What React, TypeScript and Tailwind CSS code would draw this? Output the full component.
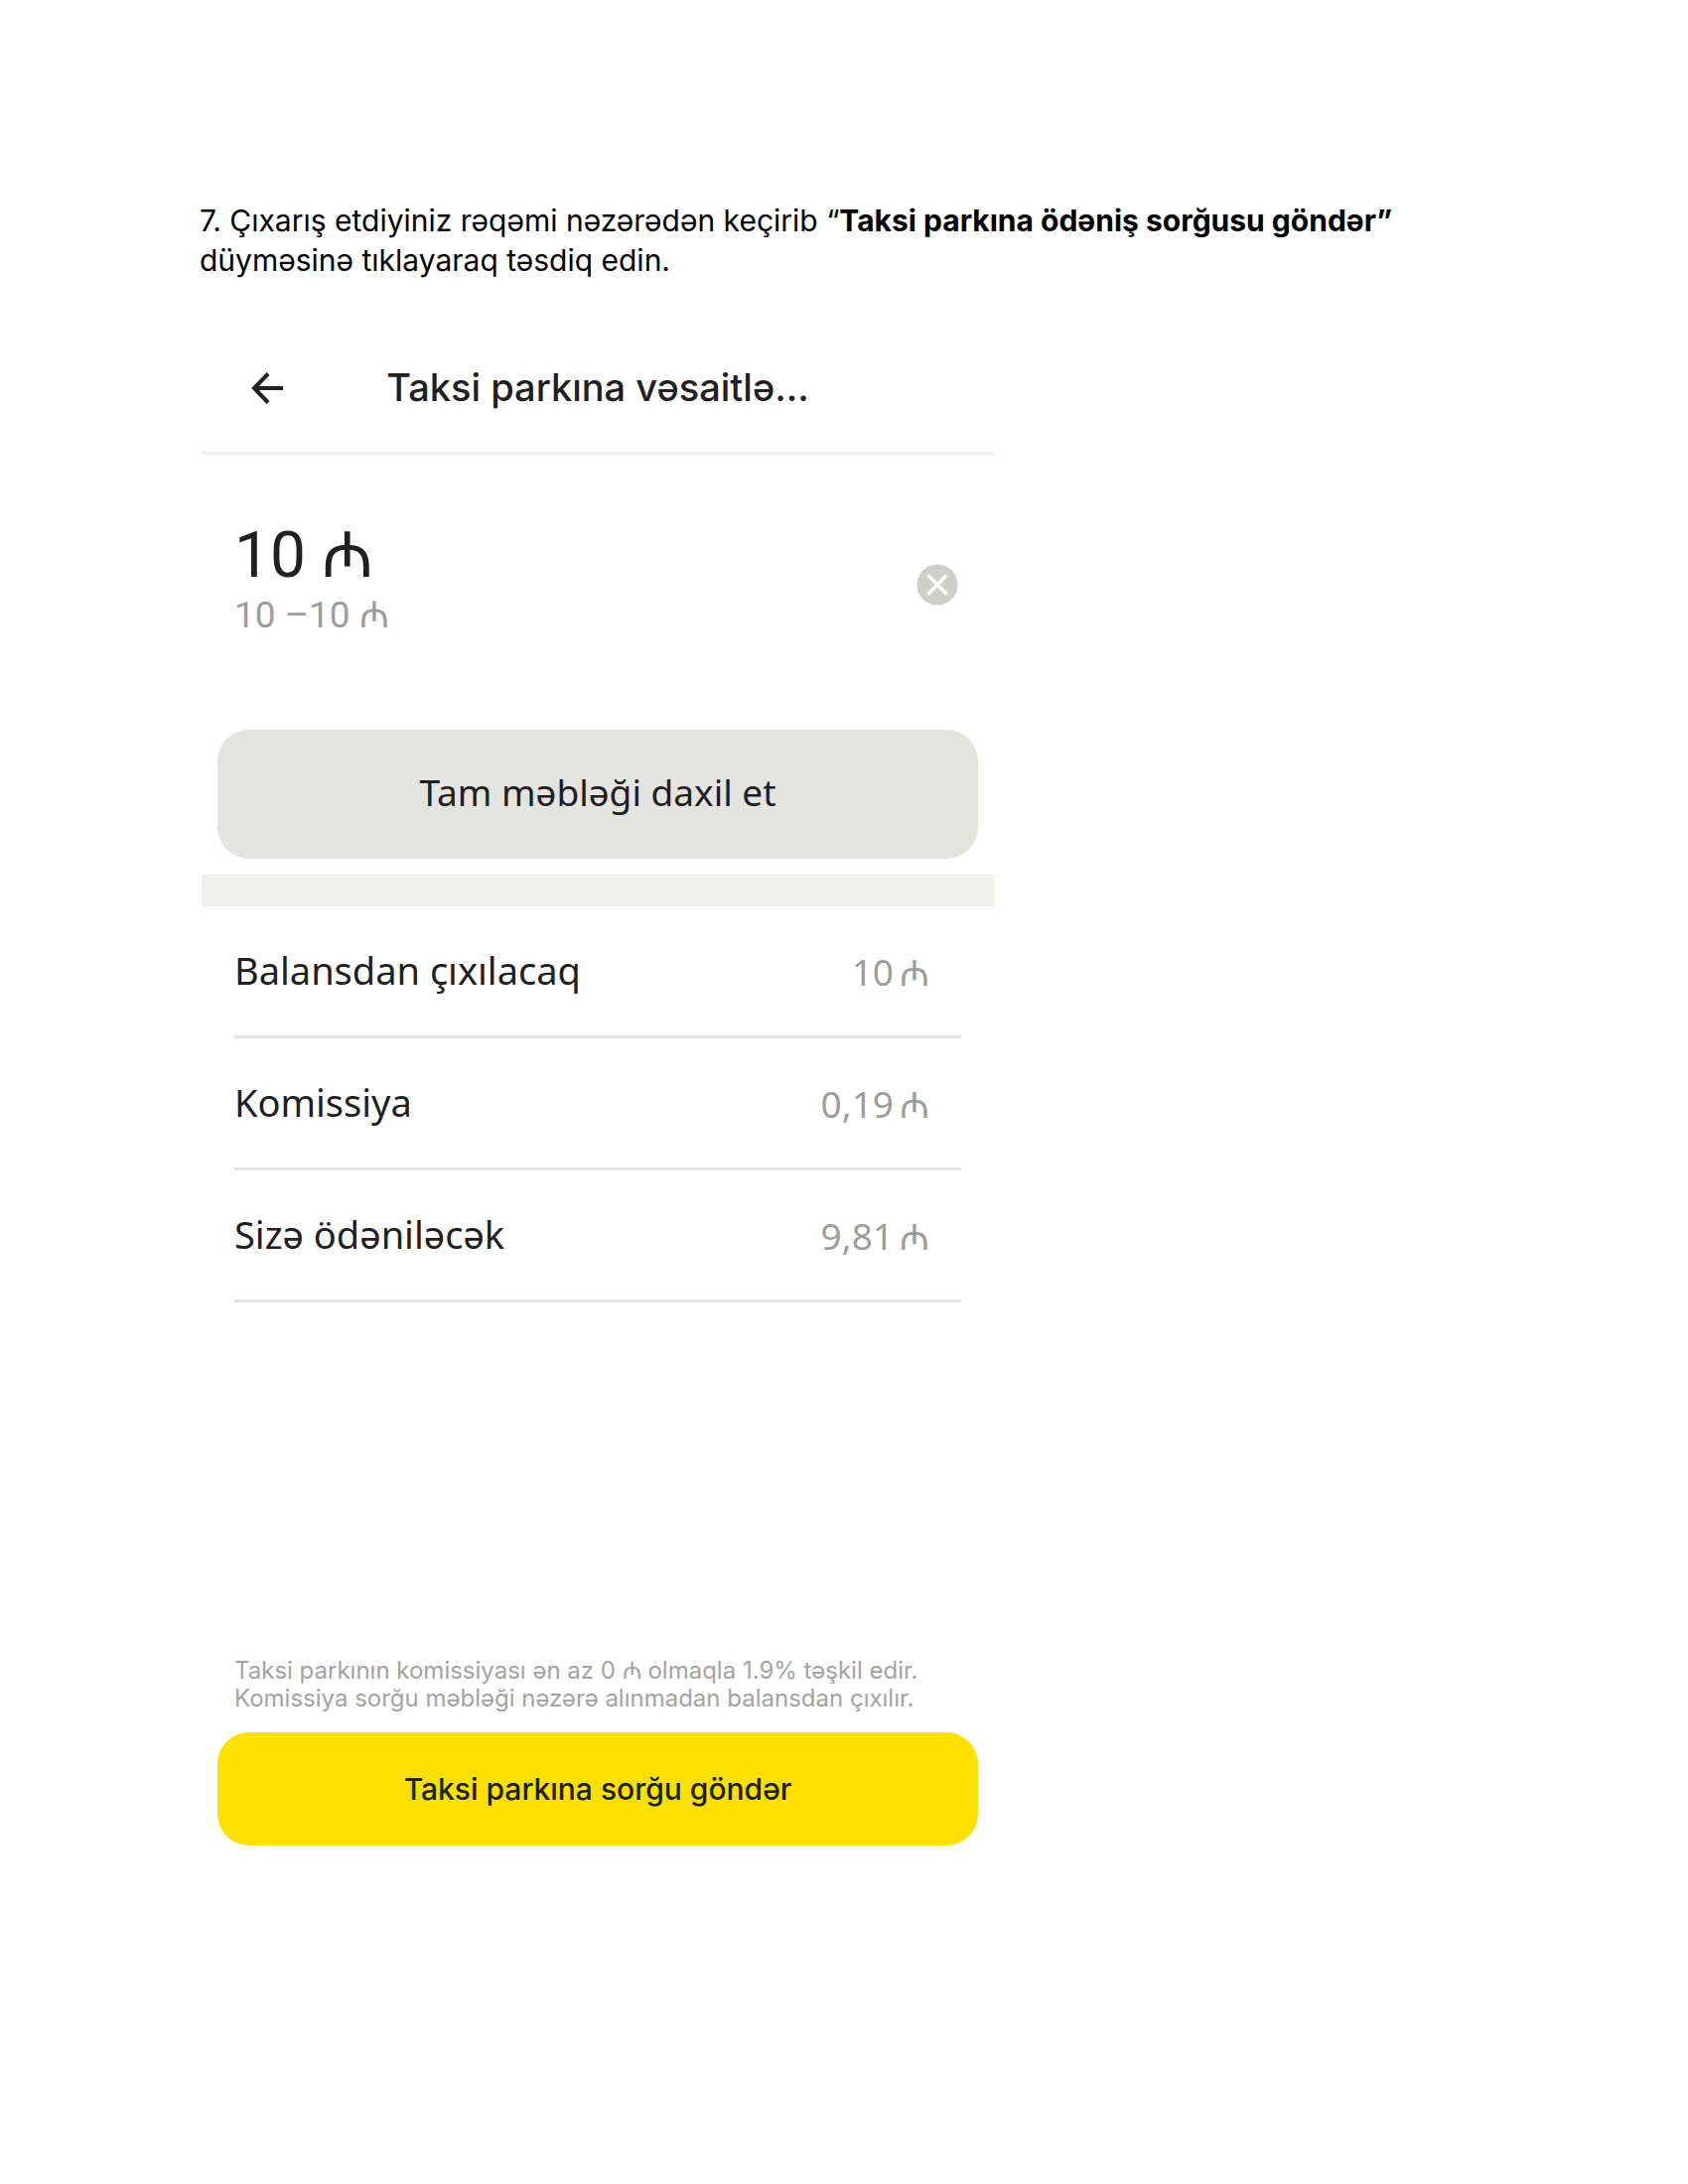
import React from "react";

const rows = [
  { label: "Balansdan çıxılacaq", value: "10" },
  { label: "Komissiya", value: "0,19" },
  { label: "Sizə ödəniləcək", value: "9,81" },
];

function BackArrow() {
  return (
    <svg viewBox="0 0 32 32" className="size-8" fill="none" stroke="currentColor" strokeWidth="4" aria-hidden="true">
      <path d="M17 1.5 3 16l14 14.500M3 16h29" />
    </svg>
  );
}

function ClearIcon() {
  return (
    <svg viewBox="0 0 42 42" className="size-[42px]" aria-hidden="true">
      <circle cx="21" cy="21" r="20.500" fill="#cecfcb" />
      <path d="M11.500 11.500l19 19M30.500 11.500l-19 19" stroke="#fff" strokeWidth="3.500" />
    </svg>
  );
}

export default function App() {
  return (
    <main className="min-h-screen bg-white px-[200px] pt-[202px] pb-20 font-['Inter',sans-serif] text-black">
      <p className="pl-px text-[30px] leading-10">
        7. Çıxarış etdiyiniz rəqəmi nəzərədən keçirib “<strong className="font-bold">Taksi parkına ödəniş sorğusu göndər”</strong>
        <br />
        düyməsinə tıklayaraq təsdiq edin.
      </p>

      <section className="mt-[53px] ml-[3px] w-full max-w-[798px] font-['Noto_Sans',sans-serif] text-[#21201f]">
        <header className="relative flex h-[123px] items-center justify-center border-b-3 border-[#eeefee] pb-2">
          <button type="button" aria-label="Geri" className="absolute left-[50px]">
            <BackArrow />
          </button>
          <h1 className="pb-0.5 font-['Inter',sans-serif] text-[38px] leading-[48px] font-medium">Taksi parkına vəsaitlə...</h1>
        </header>

        <div className="flex items-center justify-between px-[33px] pt-[62px] pb-[94px] font-['Roboto','DejaVu_Sans',sans-serif]">
          <div>
            <p className="text-[64px] leading-[78px]">
              10 <span className="font-['DejaVu_Sans',sans-serif]">₼</span>
            </p>
            <p className="text-[37px] leading-[42px] text-[#9e9d9b]">
              10 –10 <span className="font-['DejaVu_Sans',sans-serif]">₼</span>
            </p>
          </div>
          <button type="button" aria-label="Təmizlə" className="mt-4 mr-[3px]">
            <ClearIcon />
          </button>
        </div>

        <div className="px-4 pb-4">
          <button type="button" className="h-[130px] w-full rounded-[32px] bg-[#e4e5e0] pb-1 text-[37px]">
            Tam məbləği daxil et
          </button>
        </div>
        <div className="h-8 bg-[#f0f0ec]" />

        <dl className="mx-[33px]">
          {rows.map((row) => (
            <div key={row.label} className="flex h-[133px] items-center justify-between border-b-3 border-[#e4e4e3] pr-8 leading-[48px]">
              <dt className="pb-0.5 text-[38px]">{row.label}</dt>
              <dd className="flex gap-1.5 pt-0.5 text-[37px] text-[#9e9d9b]">
                <span>{row.value}</span> <span>₼</span>
              </dd>
            </div>
          ))}
        </dl>

        <p className="mt-[357px] px-[33px] font-['Inter',sans-serif] text-[24px] leading-7 text-[#a4a3a2]">
          Taksi parkının komissiyası ən az 0 <span className="font-['DejaVu_Sans',sans-serif]">₼</span> olmaqla 1.9% təşkil edir.
          <br />
          Komissiya sorğu məbləği nəzərə alınmadan balansdan çıxılır.
        </p>
        <div className="px-4 pt-5">
          <button type="button" className="h-[114px] w-full rounded-[32px] bg-[#fce000] font-['Inter',sans-serif] text-[30px] font-medium">
            Taksi parkına sorğu göndər
          </button>
        </div>
      </section>
    </main>
  );
}
